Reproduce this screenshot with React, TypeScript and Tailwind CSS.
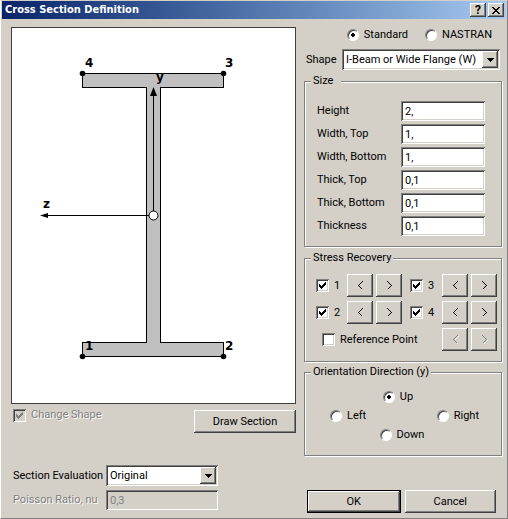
import { useState } from "react"
import type { ReactNode } from "react"
import clsx from "clsx"

const raised = "bg-[#d4d0c8] shadow-[inset_-1px_-1px_#404040,inset_1px_1px_#fff,inset_-2px_-2px_#808080]"
const sunken =
  "shadow-[inset_1px_1px_#808080,inset_-1px_-1px_#fff,inset_2px_2px_#404040,inset_-2px_-2px_#d4d0c8]"
const embossed = "text-[#808080] [text-shadow:1px_1px_#fff]"

const sizeFields = [
  { id: "height", label: "Height", value: "2," },
  { id: "width-top", label: "Width, Top", value: "1," },
  { id: "width-bottom", label: "Width, Bottom", value: "1," },
  { id: "thick-top", label: "Thick, Top", value: "0,1" },
  { id: "thick-bottom", label: "Thick, Bottom", value: "0,1" },
  { id: "thickness", label: "Thickness", value: "0,1" },
]

function Radio({ name, label, checked, onSelect }: { name: string; label: string; checked: boolean; onSelect: () => void }) {
  return (
    <label className="flex items-center gap-[5px]">
      <input
        type="radio"
        name={name}
        checked={checked}
        onChange={onSelect}
        className="size-3 appearance-none rounded-full border border-t-[#808080] border-l-[#808080] border-r-white border-b-white bg-white shadow-[inset_1px_1px_#404040] checked:bg-[radial-gradient(circle,#000_2px,#fff_2px)]"
      />
      {label}
    </label>
  )
}

function Checkbox({ label, defaultChecked, disabled }: { label: string; defaultChecked?: boolean; disabled?: boolean }) {
  return (
    <label className="flex items-center gap-[5px]">
      <span className="relative flex">
        <input
          type="checkbox"
          defaultChecked={defaultChecked}
          disabled={disabled}
          className={clsx("peer size-[13px] appearance-none", sunken, disabled ? "bg-[#d4d0c8]" : "bg-white")}
        />
        <svg
          viewBox="0 0 7 7"
          shapeRendering="crispEdges"
          className={clsx(
            "pointer-events-none invisible absolute top-[3px] left-[3px] size-[7px] peer-checked:visible",
            disabled ? "fill-[#808080]" : "fill-black"
          )}
        >
          <path d="M0 2h1v1h1v1h1v-1h1v-1h1v-1h1v-1h1v3h-1v1h-1v1h-1v1h-1v1h-1v-1h-1v-1h-1z" />
        </svg>
      </span>
      <span className={clsx(disabled && embossed)}>{label}</span>
    </label>
  )
}

function Select({ id, options, className }: { id: string; options: string[]; className?: string }) {
  return (
    <div className={clsx("relative", className)}>
      <select id={id} className={clsx("block h-[21px] w-full appearance-none bg-white pr-5 pl-1", sunken)}>
        {options.map((option) => (
          <option key={option}>{option}</option>
        ))}
      </select>
      <span
        className={clsx("pointer-events-none absolute inset-y-0.5 right-0.5 flex w-4 items-center justify-center", raised)}
      >
        <svg viewBox="0 0 7 4" shapeRendering="crispEdges" className="h-1 w-[7px]">
          <path d="M0 0h7v1h-1v1h-1v1h-1v1h-1v-1h-1v-1h-1v-1h-1z" />
        </svg>
      </span>
    </div>
  )
}

function Group({ title, className, children }: { title: string; className?: string; children: ReactNode }) {
  return (
    <fieldset
      className={clsx(
        "min-w-0 border border-[#808080] shadow-[1px_1px_#fff,inset_1px_1px_#fff]",
        className
      )}
    >
      <legend className="ml-1.5 min-w-[30px] bg-[#d4d0c8] px-0.5">{title}</legend>
      {children}
    </fieldset>
  )
}

function StepButtons({ point, disabled }: { point: string; disabled?: boolean }) {
  return (
    <div className="flex gap-[3px]">
      {["previous", "next"].map((step) => (
        <button
          key={step}
          disabled={disabled}
          aria-label={`${point} ${step}`}
          className={clsx("flex h-[23px] w-[26px] items-center justify-center", raised)}
        >
          <svg viewBox="0 0 5 9" className="h-[9px] w-[5px] overflow-visible fill-none" shapeRendering="crispEdges">
            {disabled && <path d={step === "next" ? "M1.5 1.5l4 4-4 4" : "M5.5 1.5l-4 4 4 4"} stroke="#fff" />}
            <path
              d={step === "next" ? "M.5 .5l4 4-4 4" : "M4.5 .5l-4 4 4 4"}
              stroke={disabled ? "#808080" : "#000"}
            />
          </svg>
        </button>
      ))}
    </div>
  )
}

function SectionDrawing() {
  return (
    <svg viewBox="0 0 283 375" className="block w-full border border-[#404040] bg-white">
      <g shapeRendering="crispEdges">
        <path
          d="M70.5 45.5H211.5V59.5H148.5V314.5H211.5V328.5H70.5V314.5H134.5V59.5H70.5Z"
          fill="#c0c0c0"
          stroke="#000"
        />
        <path d="M141.5 60V187.5H30" fill="none" stroke="#000" />
      </g>
      <path d="M141.5 59L145 68H138Z" />
      <path d="M28 187.5L36 185V190Z" />
      <circle cx="141.5" cy="187.5" r="4.5" fill="#fff" stroke="#000" />
      {[
        [70.5, 45.5],
        [211.5, 45.5],
        [70.5, 328.5],
        [211.5, 328.5],
      ].map(([x, y]) => (
        <circle key={`${x}-${y}`} cx={x} cy={y} r="2.8" />
      ))}
      <g className="font-['DejaVu_Sans',sans-serif] text-[12px] font-bold">
        <text x="73" y="39">4</text>
        <text x="213" y="39">3</text>
        <text x="73" y="322">1</text>
        <text x="213" y="322">2</text>
        <text x="144" y="53">y</text>
        <text x="31" y="180">z</text>
      </g>
    </svg>
  )
}

export default function App() {
  const [standard, setStandard] = useState("Standard")
  const [direction, setDirection] = useState("Up")

  const radio = (label: string) => (
    <Radio name="direction" label={label} checked={direction === label} onSelect={() => setDirection(label)} />
  )

  return (
    <div className="flex min-h-screen flex-col border border-t-[#d4d0c8] border-r-[#808080] border-b-[#808080] border-l-white bg-[#d4d0c8] font-['Roboto','Liberation_Sans',sans-serif] text-[11px] leading-4 text-black">
      {/* Title bar */}
      <header className="mx-px flex h-[18px] items-center gap-0.5 bg-linear-to-r from-[#0a246a] to-[#a6caf0] pr-0.5 pl-[3px]">
        <h1 className="flex-1 font-['DejaVu_Sans_Condensed','DejaVu_Sans',sans-serif] text-[11px] font-bold text-white">
          Cross Section Definition
        </h1>
        <button className={clsx("flex h-3.5 w-4 items-center justify-center text-[12px] leading-3 font-bold", raised)}>
          ?
        </button>
        <button aria-label="Close" className={clsx("flex h-3.5 w-4 items-center justify-center", raised)}>
          <svg viewBox="0 0 8 7" className="h-[7px] w-2" shapeRendering="crispEdges">
            <path d="M0 0h2v1h1v1h2v-1h1v-1h2v1h-1v1h-1v1h-1v1h1v1h1v1h1v1h-2v-1h-1v-1h-2v1h-1v1h-2v-1h1v-1h1v-1h1v-1h-1v-1h-1v-1h-1z" />
          </svg>
        </button>
      </header>

      <div className="flex flex-1 gap-2 pt-2 pr-[5px] pl-2.5">
        {/* Preview */}
        <div className="flex min-w-0 flex-1 flex-col pb-2">
          <SectionDrawing />
          <div className="mt-[3px] flex items-start justify-between pl-0.5">
            <Checkbox label="Change Shape" defaultChecked disabled />
            <button className={clsx("mt-[3px] h-[23px] w-[102px]", raised)}>Draw Section</button>
          </div>
          <div className="mt-auto grid grid-cols-[93px_112px] items-center gap-y-1 pl-0.5">
            <label htmlFor="evaluation" className="whitespace-nowrap">Section Evaluation</label>
            <Select id="evaluation" options={["Original", "Alternate"]} />
            <label htmlFor="poisson" className={clsx("whitespace-nowrap", embossed)}>Poisson Ratio, nu</label>
            <input
              id="poisson"
              disabled
              defaultValue="0,3"
              className={clsx("h-5 w-full bg-[#d4d0c8] px-1 text-[#808080]", sunken)}
            />
          </div>
        </div>

        {/* Properties */}
        <div className="flex w-[198px] flex-col pb-[5px]">
          <div className="flex justify-end gap-[17px] pr-2.5">
            {["Standard", "NASTRAN"].map((label) => (
              <Radio
                key={label}
                name="standard"
                label={label}
                checked={standard === label}
                onSelect={() => setStandard(label)}
              />
            ))}
          </div>
          <div className="mt-1.5 flex items-center justify-between pr-0.5 pl-0.5">
            <label htmlFor="shape">Shape</label>
            <Select id="shape" className="w-[158px]" options={["I-Beam or Wide Flange (W)"]} />
          </div>

          <Group title="Size" className="mt-[3px]">
            <div className="grid gap-[3px] pt-3 pr-4 pb-2.5 pl-3">
              {sizeFields.map((field) => (
                <div key={field.id} className="flex items-center justify-between">
                  <label htmlFor={field.id}>{field.label}</label>
                  <input
                    id={field.id}
                    defaultValue={field.value}
                    className={clsx("h-5 w-[84px] bg-white px-1", sunken)}
                  />
                </div>
              ))}
            </div>
          </Group>

          <Group title="Stress Recovery" className="mt-[3px]">
            <div className="grid grid-cols-[1fr_auto_40px_auto] items-center gap-y-1 pt-2 pr-1 pb-2.5 pl-[11px]">
              <Checkbox label="1" defaultChecked />
              <StepButtons point="1" />
              <div className="pl-2">
                <Checkbox label="3" defaultChecked />
              </div>
              <StepButtons point="3" />
              <Checkbox label="2" defaultChecked />
              <StepButtons point="2" />
              <div className="pl-2">
                <Checkbox label="4" defaultChecked />
              </div>
              <StepButtons point="4" />
              <div className="col-span-3 pl-1.5">
                <Checkbox label="Reference Point" />
              </div>
              <StepButtons point="Reference" disabled />
            </div>
          </Group>

          <Group title="Orientation Direction (y)" className="mt-0.5">
            <div className="flex flex-col items-center gap-[3px] pt-[9px] pb-3">
              <div className="pr-2.5">{radio("Up")}</div>
              <div className="flex w-full justify-between pr-[22px] pl-[25px]">
                {radio("Left")}
                {radio("Right")}
              </div>
              <div className="pr-0.5">{radio("Down")}</div>
            </div>
          </Group>

          <div className="mt-auto flex gap-1 pr-1.5 pl-[3px]">
            <button className={clsx("h-[23px] flex-1 border border-black", raised)}>OK</button>
            <button className={clsx("h-[23px] flex-1", raised)}>Cancel</button>
          </div>
        </div>
      </div>
    </div>
  )
}
